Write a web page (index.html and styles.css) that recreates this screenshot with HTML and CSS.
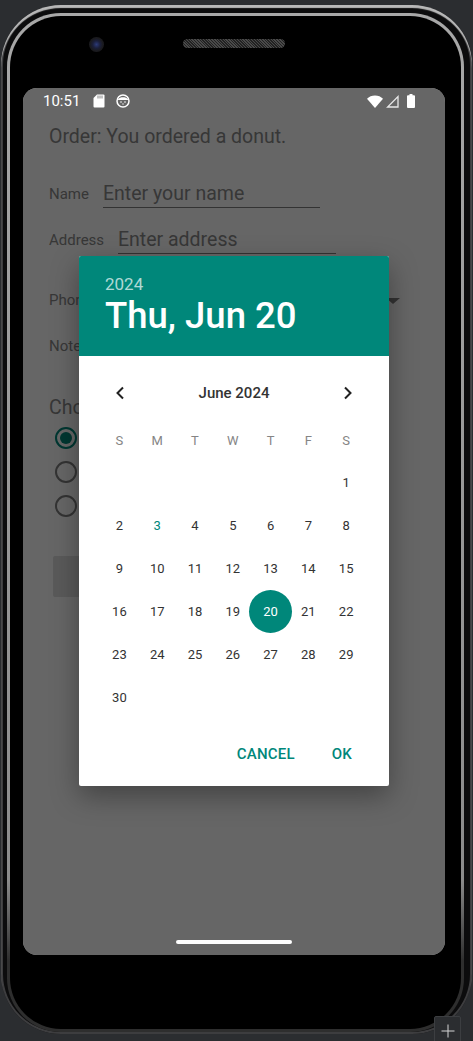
FILE: index.html
```html
<!DOCTYPE html>
<html>

<head>
    <meta charset="utf-8">
    <title>Date picker</title>
    <link rel="stylesheet" href="styles.css">
</head>

<body>
    <div class="device">
        <div class="bezel">
            <div class="bezel-inner">
                <div class="device-top">
                    <div class="camera"></div>
                    <div class="speaker"></div>
                </div>

                <div class="screen">
                    <div class="page">
                        <div class="order">Order: You ordered a donut.</div>

                        <div class="row row-name">
                            <span class="label">Name</span>
                            <span class="field field-name">Enter your name</span>
                        </div>
                        <div class="row row-address">
                            <span class="label">Address</span>
                            <span class="field field-address">Enter address</span>
                        </div>
                        <div class="row row-phone">
                            <span class="label">Phone</span>
                            <span class="arrow"></span>
                        </div>
                        <div class="row row-note">
                            <span class="label">Note</span>
                        </div>

                        <div class="choose">Choose</div>
                        <div class="radio radio-on"><span class="dot"></span></div>
                        <div class="radio"></div>
                        <div class="radio"></div>
                        <div class="next"></div>
                    </div>

                    <div class="scrim"></div>

                    <div class="statusbar">
                        <span class="time">10:51</span>
                        <svg class="icon-sd" width="12" height="14" viewBox="0 0 12 14"><path d="M4 0.500h6.500a1 1 0 0 1 1 1v11a1 1 0 0 1-1 1h-9a1 1 0 0 1-1-1V4z" fill="#fff"/><path d="M5 1.500v3M7 1.500v3M9 1.500v3" stroke="#666" stroke-width="0.8"/></svg>
                        <svg class="icon-cat" width="14" height="14" viewBox="0 0 14 14"><circle cx="7" cy="7" r="6" fill="none" stroke="#fff" stroke-width="1.500"/><path d="M1.500 6C3 3.600 5 3.200 7 3.200S11 3.600 12.500 6z" fill="#fff"/><circle cx="5" cy="8" r="0.800" fill="#fff"/><circle cx="9" cy="8" r="0.800" fill="#fff"/><circle cx="7" cy="10" r="0.700" fill="#fff"/></svg>
                        <span class="status-space"></span>
                        <svg class="icon-wifi" width="16" height="13" viewBox="0 0 16 13"><path d="M0 3.800C2 1.600 4.800 0.400 8 0.400s6 1.200 8 3.400L8 13z" fill="#fff"/></svg>
                        <svg class="icon-signal" width="13" height="13" viewBox="0 0 13 13"><path d="M12 1.600V12H1.600z" fill="none" stroke="#e8e8e8" stroke-width="1.300"/></svg>
                        <svg class="icon-battery" width="8" height="14" viewBox="0 0 8 14"><path d="M2.500 0h3v1.200H7a1 1 0 0 1 1 1V13a1 1 0 0 1-1 1H1a1 1 0 0 1-1-1V2.200a1 1 0 0 1 1-1h1.500z" fill="#fff"/></svg>
                    </div>

                    <div class="dialog">
                        <div class="dialog-head">
                            <div class="year">2024</div>
                            <div class="date">Thu, Jun 20</div>
                        </div>
                        <div class="month-row">
                            <svg width="10" height="14" viewBox="0 0 10 14"><path d="M8 1.500L2.500 7 8 12.500" fill="none" stroke="#212121" stroke-width="2"/></svg>
                            <span class="month">June 2024</span>
                            <svg width="10" height="14" viewBox="0 0 10 14"><path d="M2 1.500L7.500 7 2 12.500" fill="none" stroke="#212121" stroke-width="2"/></svg>
                        </div>
                        <div class="weekdays">
                            <span>S</span><span>M</span><span>T</span><span>W</span><span>T</span><span>F</span><span>S</span>
                        </div>
                        <div class="days">
                            <span></span><span></span><span></span><span></span><span></span><span></span><span>1</span>
                            <span>2</span><span class="today">3</span><span>4</span><span>5</span><span>6</span><span>7</span><span>8</span>
                            <span>9</span><span>10</span><span>11</span><span>12</span><span>13</span><span>14</span><span>15</span>
                            <span>16</span><span>17</span><span>18</span><span>19</span><span class="selected">20</span><span>21</span><span>22</span>
                            <span>23</span><span>24</span><span>25</span><span>26</span><span>27</span><span>28</span><span>29</span>
                            <span>30</span>
                        </div>
                        <div class="actions">
                            <span>CANCEL</span>
                            <span>OK</span>
                        </div>
                    </div>

                    <div class="handle"></div>
                </div>
            </div>
        </div>
    </div>

    <div class="corner-btn">
        <svg width="14" height="14" viewBox="0 0 14 14"><path d="M7 0.500V13.500M0.500 7H13.500" stroke="#d5d5d5" stroke-width="1"/></svg>
    </div>
</body>

</html>
```

FILE: styles.css
```css
html, body {
    margin: 0;
    height: 100%;
    overflow: hidden;
}

body {
    background-color: #2b2d30;
    font-family: Roboto, "Liberation Sans", sans-serif;
}

/* phone frame: dark outer shell, light ring, black glass */
.device {
    box-sizing: border-box;
    width: 471px;
    height: 1029px;
    margin: 5px 0 0 1px;
    padding: 8px 8px 2px 6px;
    background-color: #0c0c0d;
    border-radius: 60px;
    box-shadow: inset 0 3px 1px #b8b8b8, inset 0 0 0 2px #3d3d3f;
}

.bezel {
    box-sizing: border-box;
    height: 100%;
    padding: 3px;
    border-radius: 54px;
    background: linear-gradient(#a8a8a8 0, #8c8c8c 85%, #2e2e2e 93%);
}

.bezel-inner {
    box-sizing: border-box;
    height: 100%;
    padding-left: 13px;
    border-radius: 51px;
    background-color: #000;
}

.device-top {
    box-sizing: border-box;
    display: flex;
    align-items: flex-start;
    height: 72px;
    padding: 21px 0 0 66px;
}

.camera {
    width: 15px;
    height: 15px;
    border-radius: 50%;
    background: radial-gradient(circle, #2c3a78 0, #1b1f3a 35%, #1a1a1e 60%);
}

.speaker {
    width: 102px;
    height: 9px;
    margin: 2px 0 0 79px;
    border-radius: 5px;
    background: repeating-linear-gradient(45deg, #4a4a4a 0, #4a4a4a 1px, #222 1px, #222 2px);
}

.screen {
    position: relative;
    width: 422px;
    height: 867px;
    border-radius: 14px;
    overflow: hidden;
    background-color: #fff;
}

.page {
    padding: 38px 0 0 26px;
    color: #8a8a8a;
}

.order {
    font-size: 19.5px;
    line-height: 22px;
}

.row {
    display: flex;
    align-items: flex-end;
    height: 28px;
}

.row-name {
    margin-top: 32px;
}

.row-address {
    margin-top: 18px;
}

.row-phone {
    margin-top: 32px;
    position: relative;
}

.row-note {
    margin-top: 18px;
}

.label {
    width: 54px;
    flex: none;
    font-size: 15px;
    line-height: 20px;
    padding-bottom: 4px;
}

.field {
    font-size: 19.5px;
    line-height: 24px;
    height: 28px;
    padding-top: 2px;
    box-sizing: border-box;
    border-bottom: 1px solid #808080;
}

.field-name {
    width: 217px;
}

.field-address {
    width: 218px;
    margin-left: 15px;
}

.arrow {
    position: absolute;
    left: 337px;
    top: 12px;
    border-left: 7px solid transparent;
    border-right: 7px solid transparent;
    border-top: 6px solid #808080;
}

.choose {
    margin-top: 36px;
    font-size: 19.5px;
    line-height: 24px;
}

.radio {
    box-sizing: border-box;
    width: 22px;
    height: 22px;
    margin: 0 0 12px 6px;
    border: 2px solid #808080;
    border-radius: 50%;
}

.radio-on {
    display: flex;
    align-items: center;
    justify-content: center;
    margin-top: 7px;
    border-color: #00897b;
}

.dot {
    width: 12px;
    height: 12px;
    border-radius: 50%;
    background-color: #00897b;
}

.next {
    width: 200px;
    height: 41px;
    margin: 39px 0 0 4px;
    background-color: #e0e0e0;
    border-radius: 2px;
}

.scrim {
    position: absolute;
    inset: 0;
    background-color: rgba(0, 0, 0, 0.6);
}

.statusbar {
    position: absolute;
    top: 0;
    left: 0;
    right: 0;
    height: 26px;
    display: flex;
    align-items: center;
    padding: 0 30px 0 20px;
    color: #fff;
    font-size: 15px;
}

.time {
    width: 50px;
}

.icon-cat {
    margin-left: 11px;
}

.status-space {
    flex: 1;
}

.icon-signal {
    margin-left: 3px;
}

.icon-battery {
    margin-left: 8px;
}

.dialog {
    position: absolute;
    left: 56px;
    top: 168px;
    width: 310px;
    height: 530px;
    background-color: #fff;
    border-radius: 2px;
    box-shadow: 0 10px 28px rgba(0, 0, 0, 0.35);
    overflow: hidden;
}

.dialog-head {
    box-sizing: border-box;
    height: 100px;
    padding: 18px 0 0 26px;
    background-color: #00877a;
    color: #fff;
}

.year {
    font-size: 17px;
    line-height: 20px;
    color: rgba(255, 255, 255, 0.7);
}

.date {
    margin-top: 2px;
    font-size: 36.5px;
    font-weight: 500;
    line-height: 40px;
}

.month-row {
    display: flex;
    align-items: center;
    justify-content: space-between;
    height: 26px;
    padding: 0 36px;
    margin-top: 24px;
}

.month {
    font-size: 15px;
    font-weight: 500;
    color: #333;
}

.weekdays, .days {
    display: grid;
    grid-template-columns: repeat(7, 37.8px);
    padding-left: 21.5px;
}

.weekdays {
    margin-top: 25px;
    height: 20px;
    line-height: 20px;
    font-size: 13px;
    color: #858585;
    text-align: center;
}

.days {
    grid-auto-rows: 43px;
    margin-top: 10px;
    font-size: 13px;
    color: #333;
}

.days span {
    display: flex;
    align-items: center;
    justify-content: center;
}

.days .today {
    color: #00877a;
}

.days .selected {
    color: #fff;
    background-color: #00877a;
    border-radius: 50%;
    width: 43px;
    height: 43px;
    justify-self: center;
}

.actions {
    display: flex;
    justify-content: flex-end;
    gap: 37px;
    padding: 25px 37px 0 0;
    font-size: 15px;
    font-weight: 500;
    line-height: 20px;
    letter-spacing: 0.2px;
    color: #00877a;
}

.handle {
    position: absolute;
    left: 153px;
    bottom: 11px;
    width: 116px;
    height: 4px;
    border-radius: 2px;
    background-color: #fff;
}

.corner-btn {
    position: absolute;
    left: 434px;
    top: 1016px;
    width: 27px;
    height: 30px;
    display: flex;
    justify-content: center;
    padding-top: 7px;
    box-sizing: border-box;
    background-color: #2b2d30;
    border: 1px solid #3c3e41;
    border-radius: 2px;
}
```
